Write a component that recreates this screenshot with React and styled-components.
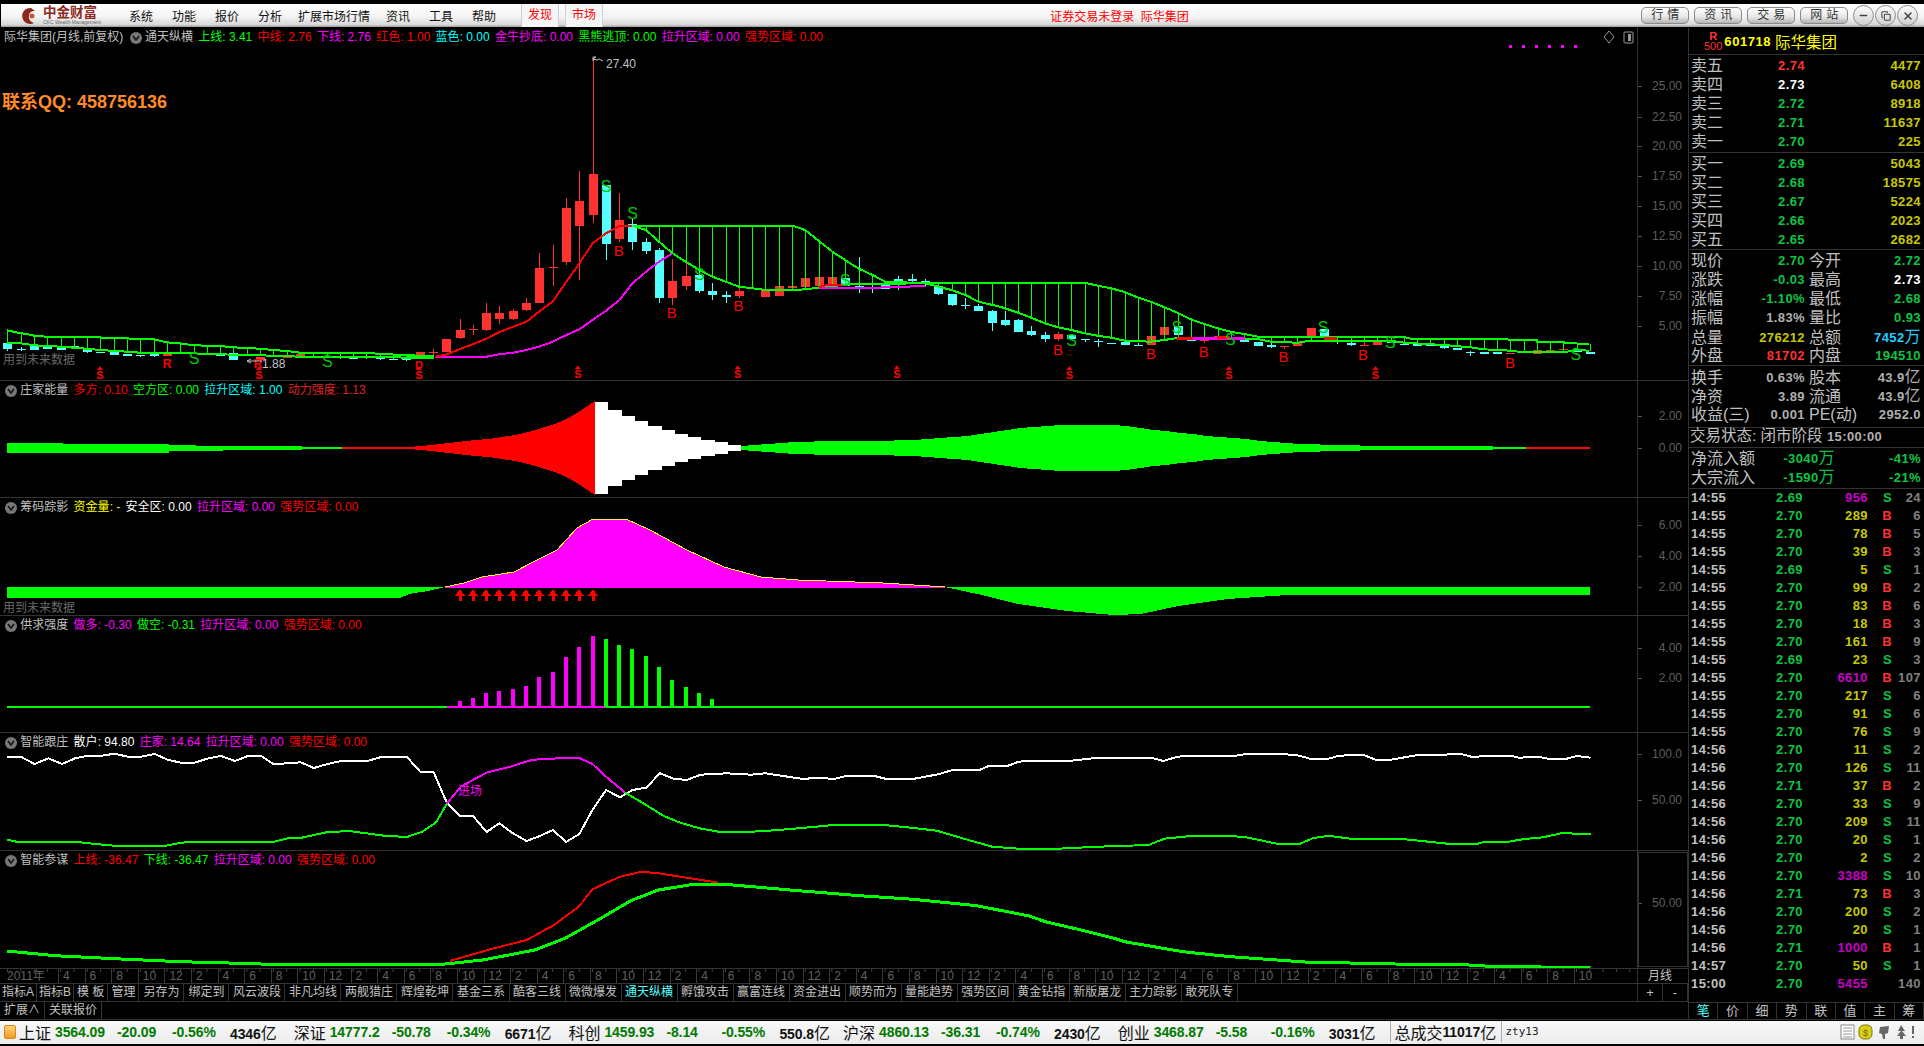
import React from 'react';
import styled, { createGlobalStyle } from 'styled-components';
import { Minus, X, Copy } from 'lucide-react';

const SANS = `"Liberation Sans", "Noto Sans CJK SC", sans-serif`;
const LINE = '#333';
const RED = '#ff3232';
const CYAN = '#54ffff';
const LIME = '#00ff00';
const MAG = '#ff00ff';
const PRICE = '#0cc444';
const GOLD = '#c8c800';

const Global = createGlobalStyle`
  * { box-sizing: border-box; }
  html, body { margin: 0; background: #000; }
  body { font-family: ${SANS}; }
`;

const Page = styled.div`
  width: 1924px;
  height: 1046px;
  padding-top: 4px;
  background: #000;
  overflow: hidden;
  display: flex;
  flex-direction: column;
`;

/* ---------- menu bar ---------- */
const MenuBar = styled.div`
  height: 23px;
  margin-bottom: 1px;
  margin-left: 1px;
  display: flex;
  align-items: center;
  background: linear-gradient(#ffffff 0%, #f4f4f4 55%, #d8d8d8 90%, #9a9a9a 100%);
  font-size: 12px;
  color: #111;
`;
const Logo = styled.div`
  width: 128px;
  padding-left: 19px;
  display: flex;
  align-items: center;
  gap: 3px;
`;
const LogoText = styled.div`
  display: flex;
  flex-direction: column;
  line-height: 1;
  color: #8c2a1e;
  font-weight: bold;
  font-size: 13.5px;
  small {
    font-size: 5px;
    font-weight: normal;
    color: #666;
    margin-top: 1px;
    white-space: nowrap;
  }
`;
const MenuItem = styled.div`
  margin-left: ${(p) => (p.$long ? -3 : 0)}px;
  margin-right: ${(p) => (p.$long ? 16 : 19)}px;
  white-space: nowrap;
`;
const FindTab = styled.div`
  width: 38px;
  height: 100%;
  margin-left: ${(p) => p.$ml || 0}px;
  margin-right: ${(p) => p.$mr || 0}px;
  color: #f00;
  text-align: center;
  line-height: 23px;
  background: #f6f6f6;
  border-left: 1px solid #cfcfcf;
  border-right: 1px solid #cfcfcf;
`;
const Notice = styled.div`
  margin-left: 447px;
  width: 591px;
  color: #f00;
  font-size: 12px;
  white-space: pre;
`;
const TopButton = styled.div`
  width: 48px;
  height: 17px;
  margin-right: 5px;
  border: 1px solid #8a8a8a;
  border-radius: 5px;
  background: linear-gradient(#fff, #e6e6e6 60%, #b5b5b5);
  font-size: 12px;
  line-height: 15px;
  letter-spacing: 4px;
  padding-left: 9px;
  color: #333;
  white-space: nowrap;
`;
const RoundButton = styled.div`
  width: 21px;
  height: 21px;
  margin-left: ${(p) => p.$ml ?? 1}px;
  border: 1px solid #8a8a8a;
  border-radius: 50%;
  background: linear-gradient(#fff, #cfcfcf);
  display: flex;
  align-items: center;
  justify-content: center;
  color: #444;
`;

/* ---------- main layout ---------- */
const Main = styled.div`
  height: 992px;
  display: flex;
`;
const LeftColumn = styled.div`
  width: 1689px;
  display: flex;
  flex-direction: column;
  border-right: 1px solid ${LINE};
`;
const Panel = styled.div`
  height: ${(p) => p.$h}px;
  display: flex;
  border-bottom: 1px solid ${LINE};
`;
const ChartArea = styled.div`
  position: relative;
  width: 1637px;
  flex: none;
  svg { display: block; }
`;
const AxisColumn = styled.div`
  flex: 1;
  border-left: 1px solid ${LINE};
  outline: ${(p) => (p.$boxed ? `1px solid ${LINE}` : 'none')};
  outline-offset: ${(p) => (p.$boxed ? '-2px' : '0')};
  svg { display: block; }
`;
const AxisText = styled.text`
  font-family: ${SANS};
  font-size: 12px;
  fill: #5e5e5e;
  text-anchor: end;
  dominant-baseline: central;
`;
const Legend = styled.div`
  position: absolute;
  left: 4px;
  top: 2px;
  display: flex;
  align-items: center;
  gap: 5.3px;
  font-size: 12px;
  line-height: 15px;
  white-space: nowrap;
  color: #c0c0c0;
`;
const LegendItem = styled.span`
  color: ${(p) => p.$c};
`;
const Arrow = styled.span`
  width: 12px;
  height: 12px;
  margin: 0 -2px 0 1px;
  border-radius: 50%;
  background: #777;
  display: flex;
  align-items: center;
  justify-content: center;
`;
const Contact = styled.div`
  position: absolute;
  left: 2px;
  top: 59px;
  color: #ff8a28;
  font-size: 18px;
  font-weight: bold;
  white-space: pre;
`;

/* ---------- time axis and tabs ---------- */
const TimeRow = styled.div`
  height: 15px;
  display: flex;
`;
const TimeCells = styled.div`
  width: 1637px;
  display: flex;
  overflow: hidden;
  border-bottom: 1px solid ${LINE};
  color: #606060;
  font-size: 12px;
  line-height: 15px;
  background-image: linear-gradient(to right, #444 1px, transparent 1px);
  background-size: 13.3px 3px;
  background-position: 7px 0;
  background-repeat: repeat-x;
`;
const TimeYear = styled.div`
  width: 58px;
  padding-left: 7px;
  flex: none;
`;
const TimeCell = styled.div`
  width: 26.6px;
  flex: none;
  padding-left: 4px;
  border-left: 1px solid #3a3a3a;
`;
const CycleCell = styled.div`
  flex: 1;
  border-left: 1px solid ${LINE};
  border-bottom: 1px solid ${LINE};
  color: #c0c0c0;
  font-size: 12px;
  padding-left: 10px;
  line-height: 15px;
`;
const TabRow = styled.div`
  height: 18px;
  display: flex;
  border-bottom: 1px solid ${LINE};
`;
const Tabs = styled.div`
  width: 1637px;
  display: flex;
`;
const Tab = styled.div`
  padding: 0 ${(p) => p.$pad ?? 3.5}px;
  border-right: 1px solid ${LINE};
  font-size: 12px;
  line-height: 17px;
  color: ${(p) => (p.$on ? CYAN : '#c0c0c0')};
  white-space: nowrap;
`;
const ZoomButtons = styled.div`
  flex: 1;
  display: flex;
  border-left: 1px solid ${LINE};
  color: #c0c0c0;
  font-size: 13px;
  line-height: 17px;
  span { width: 25px; text-align: center; border-right: 1px solid ${LINE}; }
`;

/* ---------- quote panel ---------- */
const QuotePanel = styled.div`
  width: 235px;
  display: flex;
  flex-direction: column;
  color: #c0c0c0;
  font-size: 16px;
`;
const QuoteHead = styled.div`
  height: 27px;
  flex: none;
  padding-left: 15px;
  display: flex;
  align-items: center;
  gap: 1px;
  border-bottom: 1px solid ${LINE};
  color: #ffff00;
  font-size: 15.5px;
`;
const RankBadge = styled.div`
  display: flex;
  flex-direction: column;
  align-items: center;
  margin-right: 1px;
  color: ${RED};
  font-size: 11px;
  line-height: 10px;
  b { font-size: 11px; }
`;
const Code = styled.b`
  font-size: 13px;
  letter-spacing: 0.55px;
  margin-right: 3px;
`;
const Section = styled.div`
  height: ${(p) => p.$h}px;
  flex: none;
  padding-top: ${(p) => p.$pt ?? 1}px;
  border-bottom: 1px solid ${LINE};
`;
const Row = styled.div`
  height: 19px;
  padding-left: 2px;
  display: grid;
  grid-template-columns: ${(p) => p.$cols};
  align-items: center;
  line-height: 19px;
  white-space: nowrap;
`;
const Num = styled.span`
  font-size: 13px;
  font-weight: bold;
  letter-spacing: 0.4px;
  text-align: right;
  color: ${(p) => p.$c || '#b0b0b0'};
`;
const Wan = styled.span`
  font-size: 16px;
  font-weight: normal;
`;
const Label2 = styled.span`
  padding-left: 4px;
`;
const StateRow = styled.div`
  height: 19px;
  padding-left: 1px;
  font-size: 15.5px;
  line-height: 16px;
  white-space: nowrap;
`;
const TickList = styled.div`
  height: 513px;
  flex: none;
`;
const TickRow = styled.div`
  height: 18px;
  padding-left: 2px;
  display: grid;
  grid-template-columns: 60px 52px 65px 24px 29px;
  align-items: center;
  line-height: 18px;
`;
const TickTime = styled(Num)`
  text-align: left;
  color: #c0c0c0;
`;
const Side = styled(Num)`
  color: ${(p) => (p.$v === 'B' ? RED : PRICE)};
`;
const SideTabs = styled.div`
  height: 18px;
  display: flex;
  border-top: 1px solid ${LINE};
  border-bottom: 1px solid ${LINE};
`;
const SideTab = styled.div`
  flex: 1;
  text-align: center;
  font-size: 13px;
  line-height: 16px;
  color: ${(p) => (p.$on ? CYAN : '#c0c0c0')};
  border-right: 1px solid ${LINE};
`;

/* ---------- status bar ---------- */
const StatusBar = styled.div`
  height: 23px;
  margin-top: 1px;
  padding: 0 0 2px 4px;
  display: flex;
  align-items: center;
  background: linear-gradient(#f8f8f8, #ececec);
  color: #111;
`;
const StatusIcon = styled.div`
  width: 12px;
  height: 14px;
  margin-right: 3px;
  flex: none;
  border: 1px solid #d08a20;
  border-radius: 2px;
  background: linear-gradient(#ffd27a, #f09a20);
`;
const Stock = styled.div`
  width: 274.7px;
  flex: none;
  display: grid;
  grid-template-columns: 36px 62px 55px 58px 63px;
  align-items: center;
  white-space: nowrap;
  font-size: 16px;
`;
const StatNum = styled.b`
  font-size: 14px;
  letter-spacing: -0.1px;
  color: ${(p) => p.$c || '#111'};
`;
const TotalBox = styled.div`
  width: 112px;
  height: 100%;
  margin-left: -2px;
  padding-left: 3px;
  display: flex;
  align-items: center;
  border-left: 1px solid #aaa;
  border-right: 1px solid #aaa;
  font-size: 16px;
  white-space: nowrap;
`;
const User = styled.div`
  margin-left: 3px;
  font-family: "DejaVu Sans Mono", monospace;
  font-size: 11px;
  color: #222;
`;
const TrayIcons = styled.svg`
  margin-left: auto;
  margin-right: 8px;
`;

/* ---------- chart helpers ---------- */
const cx = (i) => 7.3 + 13.3 * i;
const fromCrop = (list, ox, oy, sx) => list.map(([x, y]) => [ox + x / sx, oy + y / 3]);
const crop7 = (l) => fromCrop(l, 380, 50, 2.376);
const crop8 = (l) => fromCrop(l, 1000, 220, 2.306);
const crop10 = (l) => fromCrop(l, 0, 610, 1.823);
const crop11 = (l) => fromCrop(l, 860, 610, 1.889);
const crop12 = (l) => fromCrop(l, 0, 240, 3);
const toPoints = (pts) => pts.map(([x, y]) => `${x.toFixed(1)},${y.toFixed(1)}`).join(' ');
const at = (pts, x) => {
  for (let i = 1; i < pts.length; i++) {
    if (x <= pts[i][0]) {
      const [x0, y0] = pts[i - 1];
      const [x1, y1] = pts[i];
      return y0 + ((y1 - y0) * (x - x0)) / (x1 - x0 || 1);
    }
  }
  return pts[pts.length - 1][1];
};

const Trace = ({ pts, c, w = 2 }) => (
  <polyline points={toPoints(pts)} fill="none" stroke={c} strokeWidth={w} shapeRendering="crispEdges" />
);
const Fill = ({ pts, c }) => <polygon points={toPoints(pts)} fill={c} shapeRendering="crispEdges" />;

const ChartSvg = ({ top, h, w = 1637, children }) => (
  <svg width={w} height={h} viewBox={`0 ${top} ${w} ${h}`}>
    {children}
  </svg>
);

const Mark = styled.text`
  font-family: ${SANS};
  font-size: ${(p) => p.$s || 15}px;
  font-weight: ${(p) => (p.$b ? 'bold' : 'normal')};
  fill: ${(p) => p.$c};
  text-anchor: middle;
  dominant-baseline: central;
`;
const ChartNote = styled.text`
  font-family: ${SANS};
  font-size: ${(p) => p.$s || 12}px;
  fill: ${(p) => p.$c || '#6a6a6a'};
  dominant-baseline: central;
`;

/* [index, bodyTop, bodyBottom, high, low, colour] in crop rows */
const R = RED;
const C = CYAN;
const leftCandles = [
  [0, 310, 327, 310, 332, C], [1, 326, 328, 322, 332, C], [2, 318, 330, 318, 330, C], [3, 320, 327, 320, 327, C],
  [4, 318, 330, 318, 330, C], [5, 318, 322, 318, 322, C], [6, 328, 335, 328, 338, C], [7, 336, 338, 336, 338, C],
  [8, 335, 344, 335, 344, C], [9, 342, 347, 342, 347, C], [10, 345, 348, 345, 350, C], [11, 342, 348, 342, 350, C],
  [12, 342, 348, 342, 348, R], [16, 340, 347, 340, 347, C], [17, 340, 360, 340, 360, C], [19, 352, 360, 352, 360, R],
  [20, 349, 351, 336, 351, R], [21, 350, 352, 342, 352, R], [22, 341, 347, 341, 347, R], [25, 349, 351, 342, 356, C],
  [26, 353, 355, 350, 355, C], [27, 352, 354, 348, 358, C], [28, 355, 357, 350, 360, C], [29, 356, 358, 350, 360, C],
  [30, 357, 359, 350, 362, C],
].map(([i, a, b, h, l, c]) => [i, 240 + a / 3, 240 + b / 3, 240 + h / 3, 240 + l / 3, c]);
const midCandles = [
  [31, 907, 918, 905, 925, R], [32, 906, 909, 898, 915, R], [33, 867, 906, 867, 906, R], [34, 840, 864, 808, 866, R],
  [35, 836, 839, 826, 855, R], [36, 790, 840, 760, 843, R], [37, 790, 807, 768, 822, R], [38, 783, 807, 776, 809, R],
  [39, 759, 780, 744, 782, R], [40, 654, 759, 610, 760, R], [41, 651, 654, 586, 708, R], [42, 474, 636, 445, 645, R],
  [43, 453, 528, 363, 690, R], [44, 372, 495, 25, 520, R], [45, 405, 582, 405, 630, C], [46, 510, 568, 430, 577, R],
  [47, 522, 576, 505, 600, C], [48, 576, 603, 565, 612, C], [49, 600, 744, 595, 760, C], [50, 693, 744, 627, 765, R],
  [51, 678, 708, 640, 720, R], [52, 675, 723, 660, 730, C], [53, 723, 735, 700, 750, C], [54, 736, 740, 724, 758, C],
  [55, 723, 738, 710, 745, R], [56, 715, 718, 715, 718, R], [57, 717, 741, 708, 741, R], [58, 708, 738, 708, 738, R],
  [59, 708, 714, 696, 720, R], [60, 684, 711, 684, 711, R], [61, 681, 708, 681, 708, R], [62, 681, 705, 681, 705, R],
  [63, 684, 708, 684, 708, C], [64, 708, 714, 620, 728, C], [65, 711, 714, 684, 728, C], [66, 699, 717, 699, 717, C],
  [67, 687, 702, 678, 720, C], [68, 688, 692, 672, 700, C], [69, 693, 700, 687, 710, C], [70, 708, 732, 700, 735, C],
  [71, 732, 765, 732, 768, C], [72, 766, 769, 745, 776, C], [73, 769, 783, 762, 783, C], [74, 783, 819, 780, 843, C],
  [75, 810, 825, 783, 828, C], [76, 810, 846, 806, 846, C], [77, 843, 855, 827, 858, C],
].map(([i, a, b, h, l, c]) => [i, 50 + a / 3, 50 + b / 3, 50 + h / 3, 50 + l / 3, c]);
const rightCandles = [
  [78, 345, 357, 336, 366, C], [79, 342, 357, 335, 362, R], [80, 345, 357, 345, 357, C], [81, 357, 359, 357, 365, C],
  [82, 364, 366, 358, 380, C], [83, 369, 371, 369, 371, C], [84, 365, 375, 365, 375, C], [85, 374, 376, 370, 378, C],
  [86, 348, 375, 348, 375, R], [87, 321, 345, 321, 345, R], [88, 318, 344, 318, 344, C], [89, 358, 362, 350, 362, C],
  [90, 361, 363, 358, 368, R], [91, 348, 355, 348, 355, R], [92, 350, 353, 350, 353, R], [93, 360, 366, 360, 366, C],
  [94, 365, 378, 365, 378, C], [95, 375, 380, 370, 383, C], [96, 378, 380, 378, 386, R], [97, 365, 378, 365, 378, R],
  [98, 324, 348, 324, 348, R], [99, 327, 348, 327, 348, C], [100, 364, 366, 358, 372, C], [101, 369, 375, 365, 377, C],
  [102, 375, 377, 362, 377, R], [103, 360, 375, 360, 375, R], [104, 362, 368, 362, 368, C], [105, 371, 373, 365, 375, C],
  [106, 372, 377, 372, 377, C], [107, 374, 376, 374, 378, C], [108, 378, 384, 376, 386, C], [109, 384, 390, 384, 390, C],
  [110, 396, 398, 393, 407, C], [111, 396, 402, 396, 402, C], [112, 396, 402, 396, 402, C], [113, 399, 401, 399, 403, R],
  [115, 390, 402, 390, 402, R], [116, 391, 393, 391, 393, R], [117, 387, 389, 387, 389, R], [118, 392, 394, 390, 396, C],
  [119, 396, 402, 396, 402, C],
].map(([i, a, b, h, l, c]) => [i, 220 + a / 3, 220 + b / 3, 220 + h / 3, 220 + l / 3, c]);

const Candles = () =>
  [...leftCandles, ...midCandles, ...rightCandles].map(([i, a, b, h, l, c]) => {
    const x = Math.round(cx(i));
    return (
      <g key={i} fill={c} shapeRendering="crispEdges">
        <rect x={x} y={h} width={1} height={Math.max(l - h, 1)} />
        <rect x={x - 4} y={a} width={9} height={Math.max(b - a, 1)} />
      </g>
    );
  });

const bandLeftUp = crop12([
  [22, 271], [40, 275], [64, 280], [85, 283], [103, 287], [140, 290], [300, 290], [305, 294], [380, 295], [420, 298],
  [462, 298], [500, 307], [540, 310], [580, 316], [660, 318], [700, 322], [780, 326], [820, 330], [860, 333], [900, 338],
  [1100, 338], [1140, 342], [1220, 345], [1300, 350],
]);
const bandLeftLow = crop12([
  [22, 308], [62, 310], [103, 316], [183, 320], [260, 326], [302, 330], [380, 335], [420, 338], [540, 338], [622, 342],
  [740, 345], [820, 347], [900, 350], [1100, 350], [1180, 352], [1300, 355],
]);
const bandUp = [
  ...crop7([
    [605, 527], [980, 527], [1010, 540], [1040, 570], [1075, 605], [1105, 630], [1136, 655], [1170, 675], [1200, 695],
    [1263, 698],
  ]),
  ...crop8([
    [195, 188], [225, 197], [256, 205], [287, 216], [317, 232], [348, 245], [379, 262], [409, 278], [440, 298], [471, 312],
    [502, 325], [532, 335], [563, 342], [594, 350], [930, 350], [947, 356], [1145, 356], [1177, 359], [1238, 360],
    [1238, 365], [1300, 365], [1300, 370], [1358, 371],
  ]),
];
const bandLow = [
  ...crop7([
    [600, 527], [632, 540], [663, 575], [695, 610], [726, 635], [759, 660], [790, 680], [821, 695], [853, 710], [884, 715],
    [916, 720], [990, 720], [1040, 714], [1110, 703], [1200, 703], [1263, 700], [1296, 700], [1327, 710], [1358, 720],
    [1391, 735], [1422, 755],
  ]),
  ...crop8([
    [0, 260], [42, 278], [72, 293], [103, 310], [134, 322], [165, 330], [195, 340], [225, 347], [256, 353], [287, 362],
    [348, 365], [379, 360], [409, 354], [594, 357], [624, 365], [686, 368], [716, 362], [900, 362], [932, 368], [1023, 375],
    [1085, 382], [1115, 388], [1177, 392], [1207, 397], [1300, 397], [1330, 390], [1358, 392],
  ]),
];
const redRise = crop7([
  [130, 920], [157, 914], [189, 898], [222, 882], [253, 866], [284, 846], [317, 830], [348, 815], [378, 785], [410, 755],
  [443, 695], [474, 640], [505, 580], [537, 550], [569, 528], [600, 527],
]);
const magRise = crop7([
  [130, 920], [253, 920], [284, 913], [317, 908], [348, 900], [378, 890], [410, 875], [443, 855], [474, 838], [505, 810],
  [537, 782], [569, 750], [600, 700], [632, 665], [663, 635], [695, 610],
]);

const Verticals = ({ up, low, from, to }) => {
  const lines = [];
  for (let i = from; i <= to; i++) {
    const x = Math.round(cx(i)) + 0.5;
    lines.push(<line key={i} x1={x} x2={x} y1={at(up, x)} y2={at(low, x)} stroke={LIME} shapeRendering="crispEdges" />);
  }
  return lines;
};

const ArrowS = ({ x, y }) => (
  <g>
    <polygon points={`${x},${y - 9} ${x - 3},${y - 5} ${x + 3},${y - 5}`} fill="#f00" />
    <Mark x={x} y={y} $s={11} $b $c="#f00">S</Mark>
  </g>
);

const greenS = [
  ...crop7([[537, 408], [600, 490], [759, 672], [1105, 692]]),
  ...crop8([[165, 360], [408, 322], [531, 357], [745, 322], [900, 367], [1328, 403]]),
  ...crop12([[582, 355], [982, 365]]),
];
const redB = [
  ...crop7([[567, 600], [693, 786], [852, 765]]),
  ...crop8([[134, 387], [348, 400], [470, 393], [654, 408], [837, 402], [1176, 426]]),
];
const arrowS = [
  ...crop7([[470, 973], [850, 973], [1228, 973]]),
  ...crop8([[160, 465], [528, 465], [866, 465]]),
  ...crop12([[300, 405], [777, 405], [1257, 405]]),
];

const KLineChart = () => (
  <ChartSvg top={28} h={352}>
    <Candles />
    <Verticals up={bandLeftUp} low={bandLeftLow} from={0} to={31} />
    <Verticals up={bandUp} low={bandLow} from={47} to={119} />
    <Trace pts={magRise} c={MAG} />
    <Trace pts={redRise} c="#f00" />
    <Trace pts={bandLeftUp} c={LIME} />
    <Trace pts={bandLeftLow} c={LIME} />
    <rect x="407" y="355" width="27" height="4" fill={LIME} />
    <Trace pts={bandUp} c={LIME} w={2} />
    <Trace pts={bandLow} c={LIME} w={2} />
    <Trace pts={crop7([[1042, 714], [1170, 714], [1200, 712], [1296, 708]])} c={MAG} />
    <Trace pts={crop7([[1042, 712], [1060, 706], [1100, 706]])} c="#f00" />
    <Trace pts={crop8([[409, 354], [445, 354]])} c="#f00" w={3} />
    <Trace pts={crop8([[445, 356], [520, 356], [565, 356]])} c={MAG} w={3} />
    <Trace pts={crop8([[500, 352], [530, 352]])} c="#f00" w={3} />
    <Trace pts={crop8([[747, 356], [778, 356]])} c="#f00" w={3} />
    {greenS.map(([x, y]) => (
      <Mark key={`${x}s`} x={x} y={y} $s={16} $c="#00c800">S</Mark>
    ))}
    {redB.map(([x, y]) => (
      <Mark key={`${x}b`} x={x} y={y} $s={15} $c="#f00">B</Mark>
    ))}
    {arrowS.map(([x, y]) => (
      <ArrowS key={`${x}a`} x={x} y={y} />
    ))}
    <Mark x={167} y={364} $s={12} $b $c="#f00">R</Mark>
    <Mark x={258} y={364} $s={12} $b $c="#f00">R</Mark>
    <Mark x={419} y={365} $s={11} $b $c="#f00">D</Mark>
    <ChartNote x={3} y={360}>用到未来数据</ChartNote>
    <polyline points="251,363 247,361 251,359" fill="none" stroke="#c0c0c0" />
    <line x1="247" y1="361" x2="262" y2="361" stroke="#c0c0c0" />
    <ChartNote x={262} y={364} $c="#c0c0c0">1.88</ChartNote>
    <polyline points="593,61 593,57 596,57 593,59 597,60 599,59 603,61" fill="none" stroke="#c0c0c0" />
    <ChartNote x={606} y={64} $c="#c0c0c0">27.40</ChartNote>
    {[1509, 1522, 1535, 1548, 1561, 1574].map((x) => (
      <rect key={x} x={x} y={45} width={3} height={3} fill={MAG} />
    ))}
    <polygon points="1609,31 1614,37 1609,43 1604,37" fill="none" stroke="#999" />
    <rect x="1624" y="32" width="9" height="11" rx="1" fill="none" stroke="#999" />
    <rect x="1628" y="34" width="3" height="7" fill="#999" />
  </ChartSvg>
);

const energy = [
  5.3, 5.3, 5.3, 5.3, 5.3, 4.5, 4.5, 4.5, 4.5, 4.5, 4.5, 4.5, 4.5, 3.2, 3.2, 2.5, 2.5, 2, 2, 2, 2, 2, 2, 1, 1, 1,
  1, 1, 1, 1, 1, 2, 3.5, 5, 6.5, 8, 9, 11, 13, 16, 20, 24, 30, 38, 47,
  46, 38, 32, 27, 22, 18, 14, 11, 8, 6, 3,
  2, 3, 4, 5, 6, 6, 7, 7, 7, 7, 7, 7, 8, 8, 9, 10, 11, 12, 14, 16, 18, 20, 21, 22, 23, 23, 23, 23, 23,
  22, 20, 18, 17, 15, 14, 12, 11, 10, 9, 7, 6, 5, 4, 4, 3, 3, 3, 2, 2, 2, 2, 2, 2, 2, 2, 2, 2,
  1, 1, 1, 1, 1, 1, 1,
];
const stepLeft = (i) => cx(i) - 10.8;
const lens = (from, to, colour, shift = 0) => {
  const upper = [[stepLeft(from), 448 - energy[from]]];
  for (let i = from; i <= to; i++) upper.push([Math.min(1590, stepLeft(i + shift)), 448 - energy[i]]);
  const lower = upper.map(([x, y]) => [x, 896 - y]).reverse();
  return <Fill pts={[...upper, ...lower]} c={colour} />;
};
const EnergySteps = ({ from, to, colour }) => {
  const steps = [];
  for (let i = from; i <= to; i++) {
    const left = Math.max(7, stepLeft(i));
    steps.push(
      <rect
        key={i}
        x={left}
        y={448 - energy[i]}
        width={stepLeft(i + 1) - left}
        height={energy[i] * 2}
        fill={colour}
        shapeRendering="crispEdges"
      />
    );
  }
  return steps;
};

const EnergyChart = () => (
  <ChartSvg top={381} h={116}>
    <EnergySteps from={0} to={25} colour={LIME} />
    {lens(26, 44, '#f00', 1)}
    <EnergySteps from={45} to={55} colour="#fff" />
    {lens(56, 115, LIME)}
    {lens(115, 119, '#f00', 1)}
  </ChartSvg>
);

const chipTop = [
  [445, 587], [464, 583], [482, 577], [514, 572], [535, 561], [557, 550], [577, 528], [593, 519], [626, 519], [650, 530],
  [687, 550], [724, 567], [761, 577], [798, 580], [883, 583], [945, 587],
];
const chipLeft = [
  [7, 587], [445, 587], [428, 591], [409, 594], [400, 598], [115, 598], [115, 597.5], [7, 597.5],
];
const chipRight = [
  [945, 587], [1590, 587], [1590, 595], [1350, 595], [1288, 595], [1227, 599], [1178, 606], [1141, 614], [1114, 615],
  [1067, 611], [1018, 604], [982, 595],
];

const ChipChart = () => (
  <ChartSvg top={498} h={117}>
    <Fill pts={chipLeft} c={LIME} />
    <Fill pts={chipRight} c={LIME} />
    <Fill pts={[...chipTop, [945, 587.5], [445, 587.5]]} c={MAG} />
    <Trace pts={chipTop} c="#ffff00" w={1} />
    {[34, 35, 36, 37, 38, 39, 40, 41, 42, 43, 44].map((i) => {
      const x = Math.round(cx(i));
      return (
        <g key={i} fill="#f00" shapeRendering="crispEdges">
          <polygon points={`${x},589 ${x - 5},596 ${x + 5},596`} />
          <rect x={x - 1} y={595} width={3} height={6} />
        </g>
      );
    })}
    <ChartNote x={3} y={608}>用到未来数据</ChartNote>
  </ChartSvg>
);

const demandUp = [273, 264, 249, 243, 237, 228, 201, 186, 141, 111, 78];
const demandDown = [87, 105, 117, 138, 171, 210, 231, 249, 267];

const DemandChart = () => (
  <ChartSvg top={616} h={116}>
    <rect x={7} y={706} width={1583} height={2} fill={LIME} />
    <rect x={447} y={706} width={159} height={2} fill={MAG} />
    {demandUp.map((t, k) => (
      <rect key={t} x={Math.round(cx(34 + k)) - 2} y={610 + t / 3} width={4} height={707 - 610 - t / 3} fill={MAG} />
    ))}
    {demandDown.map((t, k) => (
      <rect key={t} x={Math.round(cx(45 + k)) - 2} y={610 + t / 3} width={4} height={707 - 610 - t / 3} fill={LIME} />
    ))}
  </ChartSvg>
);

const retail = [
  ...crop10([
    [13, 442], [40, 442], [63, 462], [88, 445], [113, 462], [137, 445], [160, 437], [186, 437], [209, 431], [233, 440],
    [258, 440], [282, 432], [307, 450], [330, 458], [355, 458], [380, 445], [403, 438], [428, 453], [452, 438], [475, 437],
    [498, 462], [525, 460], [548, 457], [572, 474], [597, 462], [622, 453], [670, 453], [695, 441], [742, 441], [766, 485],
    [790, 485], [815, 580], [838, 617], [862, 617], [887, 666], [910, 640], [935, 670], [960, 693], [984, 678], [1008, 660],
    [1032, 696], [1056, 672], [1080, 600], [1105, 540], [1130, 562], [1153, 540], [1178, 533], [1203, 490], [1228, 506],
    [1252, 510], [1277, 494], [1325, 490], [1370, 494], [1395, 490], [1464, 507], [1490, 503], [1520, 507], [1545, 497],
  ]),
  ...crop11([
    [0, 497], [25, 497], [50, 507], [100, 507], [150, 492], [175, 480], [225, 480], [245, 467], [280, 467], [300, 455],
    [325, 452], [400, 452], [450, 443], [550, 443], [573, 453], [600, 440], [625, 437], [710, 437], [730, 432], [800, 432],
    [830, 437], [850, 446], [885, 446], [905, 437], [950, 434], [975, 450], [1000, 450], [1050, 436], [1100, 434], [1135, 432],
    [1155, 440], [1230, 437], [1245, 443], [1280, 440], [1300, 446], [1335, 446], [1355, 438], [1380, 443],
  ]),
];
const bankerA = crop10([
  [13, 689], [30, 695], [135, 695], [180, 703], [215, 708], [300, 708], [330, 698], [360, 695], [500, 695], [525, 685],
  [550, 683], [600, 665], [640, 664], [700, 677], [742, 681], [770, 665], [795, 637], [815, 580],
]);
const bankerM = crop10([
  [815, 580], [840, 530], [862, 510], [887, 488], [930, 470], [965, 452], [985, 447], [1055, 443], [1080, 462], [1105, 500],
  [1140, 548],
]);
const bankerB = [
  ...crop10([
    [1140, 548], [1178, 585], [1210, 618], [1240, 638], [1275, 655], [1310, 665], [1370, 665], [1420, 660], [1475, 652],
    [1520, 645],
  ]),
  ...crop11([
    [0, 645], [45, 645], [90, 652], [145, 662], [200, 688], [250, 710], [300, 716], [375, 716], [450, 710], [545, 705],
    [575, 686], [625, 678], [700, 678], [730, 682], [790, 702], [830, 702], [855, 685], [885, 677], [930, 687], [1025, 687],
    [1115, 702], [1165, 702], [1180, 695], [1225, 695], [1255, 687], [1290, 682], [1330, 668], [1355, 672], [1380, 672],
  ]),
];

const FollowChart = () => (
  <ChartSvg top={733} h={117}>
    <Trace pts={retail} c="#fff" />
    <Trace pts={bankerA} c={LIME} />
    <Trace pts={bankerB} c={LIME} />
    <Trace pts={bankerM} c={MAG} />
    <ChartNote x={458} y={791} $c={MAG}>进场</ChartNote>
  </ChartSvg>
);

const advisorGreen = [
  ...crop10([
    [13, 1023], [100, 1037], [220, 1047], [300, 1053], [365, 1057], [440, 1060], [510, 1064], [800, 1064], [880, 1050],
    [975, 1020], [1030, 985], [1090, 930], [1150, 872], [1200, 840], [1260, 824], [1330, 824], [1440, 840],
  ]),
  ...crop11([
    [0, 857], [100, 868], [220, 887], [320, 918], [350, 935], [410, 957], [480, 985], [500, 995], [610, 1025], [700, 1040],
    [840, 1056], [1010, 1062], [1140, 1064], [1190, 1069], [1380, 1073],
  ]),
];
const advisorRed = crop10([
  [820, 1053], [900, 1015], [960, 990], [1010, 945], [1055, 890], [1080, 838], [1130, 800], [1170, 785], [1200, 790],
  [1310, 818],
]);

const AdvisorChart = () => (
  <ChartSvg top={851} h={117}>
    <Trace pts={advisorRed} c="#f00" />
    <Trace pts={advisorGreen} c={LIME} w={3} />
  </ChartSvg>
);

const Axis = ({ top, h, labels, boxed }) => (
  <AxisColumn $boxed={boxed}>
    <ChartSvg top={top} h={h} w={51}>
      {labels.map(([text, y]) => (
        <g key={text}>
          <line x1="0" x2="4" y1={y + 0.5} y2={y + 0.5} stroke="#555" />
          <AxisText x={44} y={y}>{text}</AxisText>
        </g>
      ))}
    </ChartSvg>
  </AxisColumn>
);

const Chevron = () => (
  <Arrow>
    <svg width="8" height="6" viewBox="0 0 8 6">
      <polyline points="1,1 4,5 7,1" fill="none" stroke="#111" strokeWidth="1.5" />
    </svg>
  </Arrow>
);

const PanelLegend = ({ name, title, items }) => (
  <Legend>
    {name && <span>{name}</span>}
    <Chevron />
    <span>{title}</span>
    {items.map(([label, value, c]) => (
      <LegendItem key={label} $c={c}>{label}: {value}</LegendItem>
    ))}
  </Legend>
);

const panels = [
  {
    h: 353,
    name: '际华集团(月线,前复权)',
    title: '通天纵横',
    chart: <KLineChart />,
    axisH: 352,
    top: 28,
    axis: [['25.00', 86], ['22.50', 117], ['20.00', 146], ['17.50', 176], ['15.00', 206], ['12.50', 236], ['10.00', 266], ['7.50', 296], ['5.00', 326]],
    items: [
      ['上线', '3.41', LIME], ['中线', '2.76', '#f00'], ['下线', '2.76', MAG], ['红色', '1.00', '#f00'], ['蓝色', '0.00', '#0ff'],
      ['金牛抄底', '0.00', MAG], ['黑熊逃顶', '0.00', LIME], ['拉升区域', '0.00', MAG], ['强势区域', '0.00', '#f00'],
    ],
  },
  {
    h: 117,
    title: '庄家能量',
    chart: <EnergyChart />,
    axisH: 116,
    top: 381,
    axis: [['2.00', 416], ['0.00', 448]],
    items: [['多方', '0.10', '#f00'], ['空方区', '0.00', LIME], ['拉升区域', '1.00', '#0ff'], ['动力强度', '1.13', '#e02020']],
  },
  {
    h: 118,
    title: '筹码踪影',
    chart: <ChipChart />,
    axisH: 117,
    top: 498,
    axis: [['6.00', 525], ['4.00', 556], ['2.00', 587]],
    items: [['资金量', '-', '#ff0'], ['安全区', '0.00', '#fff'], ['拉升区域', '0.00', MAG], ['强势区域', '0.00', '#f00']],
  },
  {
    h: 117,
    title: '供求强度',
    chart: <DemandChart />,
    axisH: 116,
    top: 616,
    axis: [['4.00', 648], ['2.00', 678]],
    items: [['做多', '-0.30', MAG], ['做空', '-0.31', LIME], ['拉升区域', '0.00', MAG], ['强势区域', '0.00', '#f00']],
  },
  {
    h: 118,
    title: '智能跟庄',
    chart: <FollowChart />,
    axisH: 117,
    top: 733,
    axis: [['100.0', 754], ['50.00', 800]],
    items: [['散户', '94.80', '#fff'], ['庄家', '14.64', MAG], ['拉升区域', '0.00', MAG], ['强势区域', '0.00', '#f00']],
  },
  {
    h: 118,
    title: '智能参谋',
    chart: <AdvisorChart />,
    axisH: 117,
    top: 851,
    boxed: true,
    axis: [['50.00', 903]],
    items: [['上线', '-36.47', '#f00'], ['下线', '-36.47', LIME], ['拉升区域', '0.00', MAG], ['强势区域', '0.00', '#f00']],
  },
];

const timeLabels = Array.from({ length: 58 }, (_, i) => ['4', '6', '8', '10', '12', '2'][i % 6]);
const tabs = [
  ['指标A', 2], ['指标B', 2], ['模 板', 3], ['管理', 3], ['另存为', 4], ['绑定到', 4], ['风云波段'], ['非凡均线'], ['两舰猎庄'], ['辉煌乾坤'],
  ['基金三系'], ['酷客三线'], ['微微爆发'], ['通天纵横'], ['孵饿攻击'], ['赢富连线'], ['资金进出'], ['顺势而为'], ['量能趋势'], ['强势区间'],
  ['黄金钻指'], ['新版屠龙'], ['主力踪影'], ['敢死队专'],
];

const asks = [['卖五', '2.74', '4477', RED], ['卖四', '2.73', '6408', '#fff'], ['卖三', '2.72', '8918', PRICE], ['卖二', '2.71', '11637', PRICE], ['卖一', '2.70', '225', PRICE]];
const bids = [['买一', '2.69', '5043'], ['买二', '2.68', '18575'], ['买三', '2.67', '5224'], ['买四', '2.66', '2023'], ['买五', '2.65', '2682']];
const stats = [
  ['现价', '2.70', PRICE, '今开', '2.72', PRICE],
  ['涨跌', '-0.03', PRICE, '最高', '2.73', '#fff'],
  ['涨幅', '-1.10%', PRICE, '最低', '2.68', PRICE],
  ['振幅', '1.83%', '#b0b0b0', '量比', '0.93', PRICE],
  ['总量', '276212', GOLD, '总额', '7452', '#20d0ff', '万'],
  ['外盘', '81702', RED, '内盘', '194510', PRICE],
];
const capital = [
  ['换手', '0.63%', '股本', '43.9', '亿'],
  ['净资', '3.89', '流通', '43.9', '亿'],
  ['收益(三)', '0.001', 'PE(动)', '2952.0', ''],
];
const ticks = [
  ['14:55', '2.69', '956', 'S', '24'], ['14:55', '2.70', '289', 'B', '6'], ['14:55', '2.70', '78', 'B', '5'], ['14:55', '2.70', '39', 'B', '3'],
  ['14:55', '2.69', '5', 'S', '1'], ['14:55', '2.70', '99', 'B', '2'], ['14:55', '2.70', '83', 'B', '6'], ['14:55', '2.70', '18', 'B', '3'],
  ['14:55', '2.70', '161', 'B', '9'], ['14:55', '2.69', '23', 'S', '3'], ['14:55', '2.70', '6610', 'B', '107'], ['14:55', '2.70', '217', 'S', '6'],
  ['14:55', '2.70', '91', 'S', '6'], ['14:55', '2.70', '76', 'S', '9'], ['14:56', '2.70', '11', 'S', '2'], ['14:56', '2.70', '126', 'S', '11'],
  ['14:56', '2.71', '37', 'B', '2'], ['14:56', '2.70', '33', 'S', '9'], ['14:56', '2.70', '209', 'S', '11'], ['14:56', '2.70', '20', 'S', '1'],
  ['14:56', '2.70', '2', 'S', '2'], ['14:56', '2.70', '3388', 'S', '10'], ['14:56', '2.71', '73', 'B', '3'], ['14:56', '2.70', '200', 'S', '2'],
  ['14:56', '2.70', '20', 'S', '1'], ['14:56', '2.71', '1000', 'B', '1'], ['14:57', '2.70', '50', 'S', '1'], ['15:00', '2.70', '5455', '', '140'],
];
const indices = [
  ['上证', '3564.09', '-20.09', '-0.56%', '4346'],
  ['深证', '14777.2', '-50.78', '-0.34%', '6671'],
  ['科创', '1459.93', '-8.14', '-0.55%', '550.8'],
  ['沪深', '4860.13', '-36.31', '-0.74%', '2430'],
  ['创业', '3468.87', '-5.58', '-0.16%', '3031'],
];

const QUOTE_COLS = '50px 64px 116px';
const STAT_COLS = '50px 64px 36px 80px';

const App = () => (
  <Page>
    <Global />
    <MenuBar>
      <Logo>
        <svg width="20" height="18" viewBox="0 0 20 18">
          <path d="M11 1 A8 8 0 1 0 14 16 A7 6 0 0 1 9 9 A5 5 0 0 1 15 4 Z" fill="#8c2a1e" />
          <circle cx="12" cy="9" r="2.5" fill="#c05a3a" />
        </svg>
        <LogoText>
          中金财富
          <small>CKC Wealth Management</small>
        </LogoText>
      </Logo>
      {['系统', '功能', '报价', '分析', '扩展市场行情', '资讯', '工具', '帮助'].map((m) => (
        <MenuItem key={m} $long={m.length > 2}>{m}</MenuItem>
      ))}
      <FindTab $ml={6} $mr={6}>发现</FindTab>
      <FindTab>市场</FindTab>
      <Notice>证券交易未登录  际华集团</Notice>
      {['行情', '资讯', '交易', '网站'].map((b) => (
        <TopButton key={b}>{b}</TopButton>
      ))}
      <RoundButton $ml={0}><Minus size={11} strokeWidth={3} /></RoundButton>
      <RoundButton><Copy size={10} strokeWidth={2.5} /></RoundButton>
      <RoundButton><X size={12} strokeWidth={3} /></RoundButton>
    </MenuBar>

    <Main>
      <LeftColumn>
        {panels.map((p) => (
          <Panel key={p.title} $h={p.h}>
            <ChartArea>
              {p.chart}
              <PanelLegend name={p.name} title={p.title} items={p.items} />
              {p.name && <Contact>联系QQ: 458756136</Contact>}
            </ChartArea>
            <Axis top={p.top} h={p.axisH} labels={p.axis} boxed={p.boxed} />
          </Panel>
        ))}
        <TimeRow>
          <TimeCells>
            <TimeYear>2011年</TimeYear>
            {timeLabels.map((t, i) => (
              <TimeCell key={i}>{t}</TimeCell>
            ))}
          </TimeCells>
          <CycleCell>月线</CycleCell>
        </TimeRow>
        <TabRow>
          <Tabs>
            {tabs.map(([t, pad]) => (
              <Tab key={t} $pad={pad} $on={t === '通天纵横'}>{t}</Tab>
            ))}
          </Tabs>
          <ZoomButtons><span>+</span><span>-</span></ZoomButtons>
        </TabRow>
        <TabRow>
          <Tabs>
            <Tab $pad={4}>扩展∧</Tab>
            <Tab $pad={4}>关联报价</Tab>
          </Tabs>
        </TabRow>
      </LeftColumn>

      <QuotePanel>
        <QuoteHead>
          <RankBadge><b>R</b>500</RankBadge>
          <Code>601718</Code>
          际华集团
        </QuoteHead>
        <Section $h={98}>
          {asks.map(([l, p, v, c]) => (
            <Row key={l} $cols={QUOTE_COLS}>
              <span>{l}</span>
              <Num $c={c}>{p}</Num>
              <Num $c={GOLD}>{v}</Num>
            </Row>
          ))}
        </Section>
        <Section $h={97}>
          {bids.map(([l, p, v]) => (
            <Row key={l} $cols={QUOTE_COLS}>
              <span>{l}</span>
              <Num $c={PRICE}>{p}</Num>
              <Num $c={GOLD}>{v}</Num>
            </Row>
          ))}
        </Section>
        <Section $h={116}>
          {stats.map(([a, b, c, d, e, f, u]) => (
            <Row key={a} $cols={STAT_COLS}>
              <span>{a}</span>
              <Num $c={c}>{b}</Num>
              <Label2>{d}</Label2>
              <Num $c={f}>{e}{u && <Wan>{u}</Wan>}</Num>
            </Row>
          ))}
        </Section>
        <Section $h={62}>
          {capital.map(([a, b, d, e, u]) => (
            <Row key={a} $cols={STAT_COLS}>
              <span>{a}</span>
              <Num>{b}</Num>
              <Label2>{d}</Label2>
              <Num>{e}{u && <Wan>{u}</Wan>}</Num>
            </Row>
          ))}
        </Section>
        <Section $h={20} $pt={0}>
          <StateRow>交易状态: 闭市阶段 <Num>15:00:00</Num></StateRow>
        </Section>
        <Section $h={41} $pt={0}>
          <Row $cols="76px 68px 86px">
            <span>净流入额</span>
            <Num $c={PRICE}>-3040<Wan>万</Wan></Num>
            <Num $c={PRICE}>-41%</Num>
          </Row>
          <Row $cols="76px 68px 86px">
            <span>大宗流入</span>
            <Num $c={PRICE}>-1590<Wan>万</Wan></Num>
            <Num $c={PRICE}>-21%</Num>
          </Row>
        </Section>
        <TickList>
          {ticks.map(([t, p, v, s, n], i) => (
            <TickRow key={i}>
              <TickTime>{t}</TickTime>
              <Num $c={PRICE}>{p}</Num>
              <Num $c={Number(v) >= 500 ? '#c800c8' : GOLD}>{v}</Num>
              <Side $v={s}>{s}</Side>
              <Num $c="#808080">{n}</Num>
            </TickRow>
          ))}
        </TickList>
        <SideTabs>
          {['笔', '价', '细', '势', '联', '值', '主', '筹'].map((t) => (
            <SideTab key={t} $on={t === '笔'}>{t}</SideTab>
          ))}
        </SideTabs>
      </QuotePanel>
    </Main>

    <StatusBar>
      <StatusIcon />
      {indices.map(([n, p, d, r, v]) => (
        <Stock key={n}>
          <span>{n}</span>
          <StatNum $c="#007a00">{p}</StatNum>
          <StatNum $c="#007a00">{d}</StatNum>
          <StatNum $c="#007a00">{r}</StatNum>
          <span><StatNum>{v}</StatNum>亿</span>
        </Stock>
      ))}
      <TotalBox>总成交 <StatNum>11017</StatNum>亿</TotalBox>
      <User>zty13</User>
      <TrayIcons width="76" height="18" viewBox="0 0 76 18">
        <rect x="1" y="2" width="13" height="14" fill="#fff" stroke="#888" />
        <path d="M3 5h9M3 8h9M3 11h9M3 14h9" stroke="#999" />
        <rect x="19" y="2" width="13" height="14" rx="5" fill="#d8d010" stroke="#7a7a10" />
        <text x="25.5" y="13" fontSize="9" textAnchor="middle" fill="#6a6a10" fontFamily="Liberation Sans">$</text>
        <path d="M40 4l9-1-1 7-3 1 0 5-2 0-1-5-3-1z" fill="#666" />
        <path d="M61 2l4 6h-3l4 5h-3v3h-3v-3h-3l4-5h-3z" fill="#666" />
        <rect x="72" y="3" width="2" height="8" fill="#666" />
        <rect x="72" y="13" width="2" height="2" fill="#666" />
      </TrayIcons>
    </StatusBar>
  </Page>
);

export default App;
